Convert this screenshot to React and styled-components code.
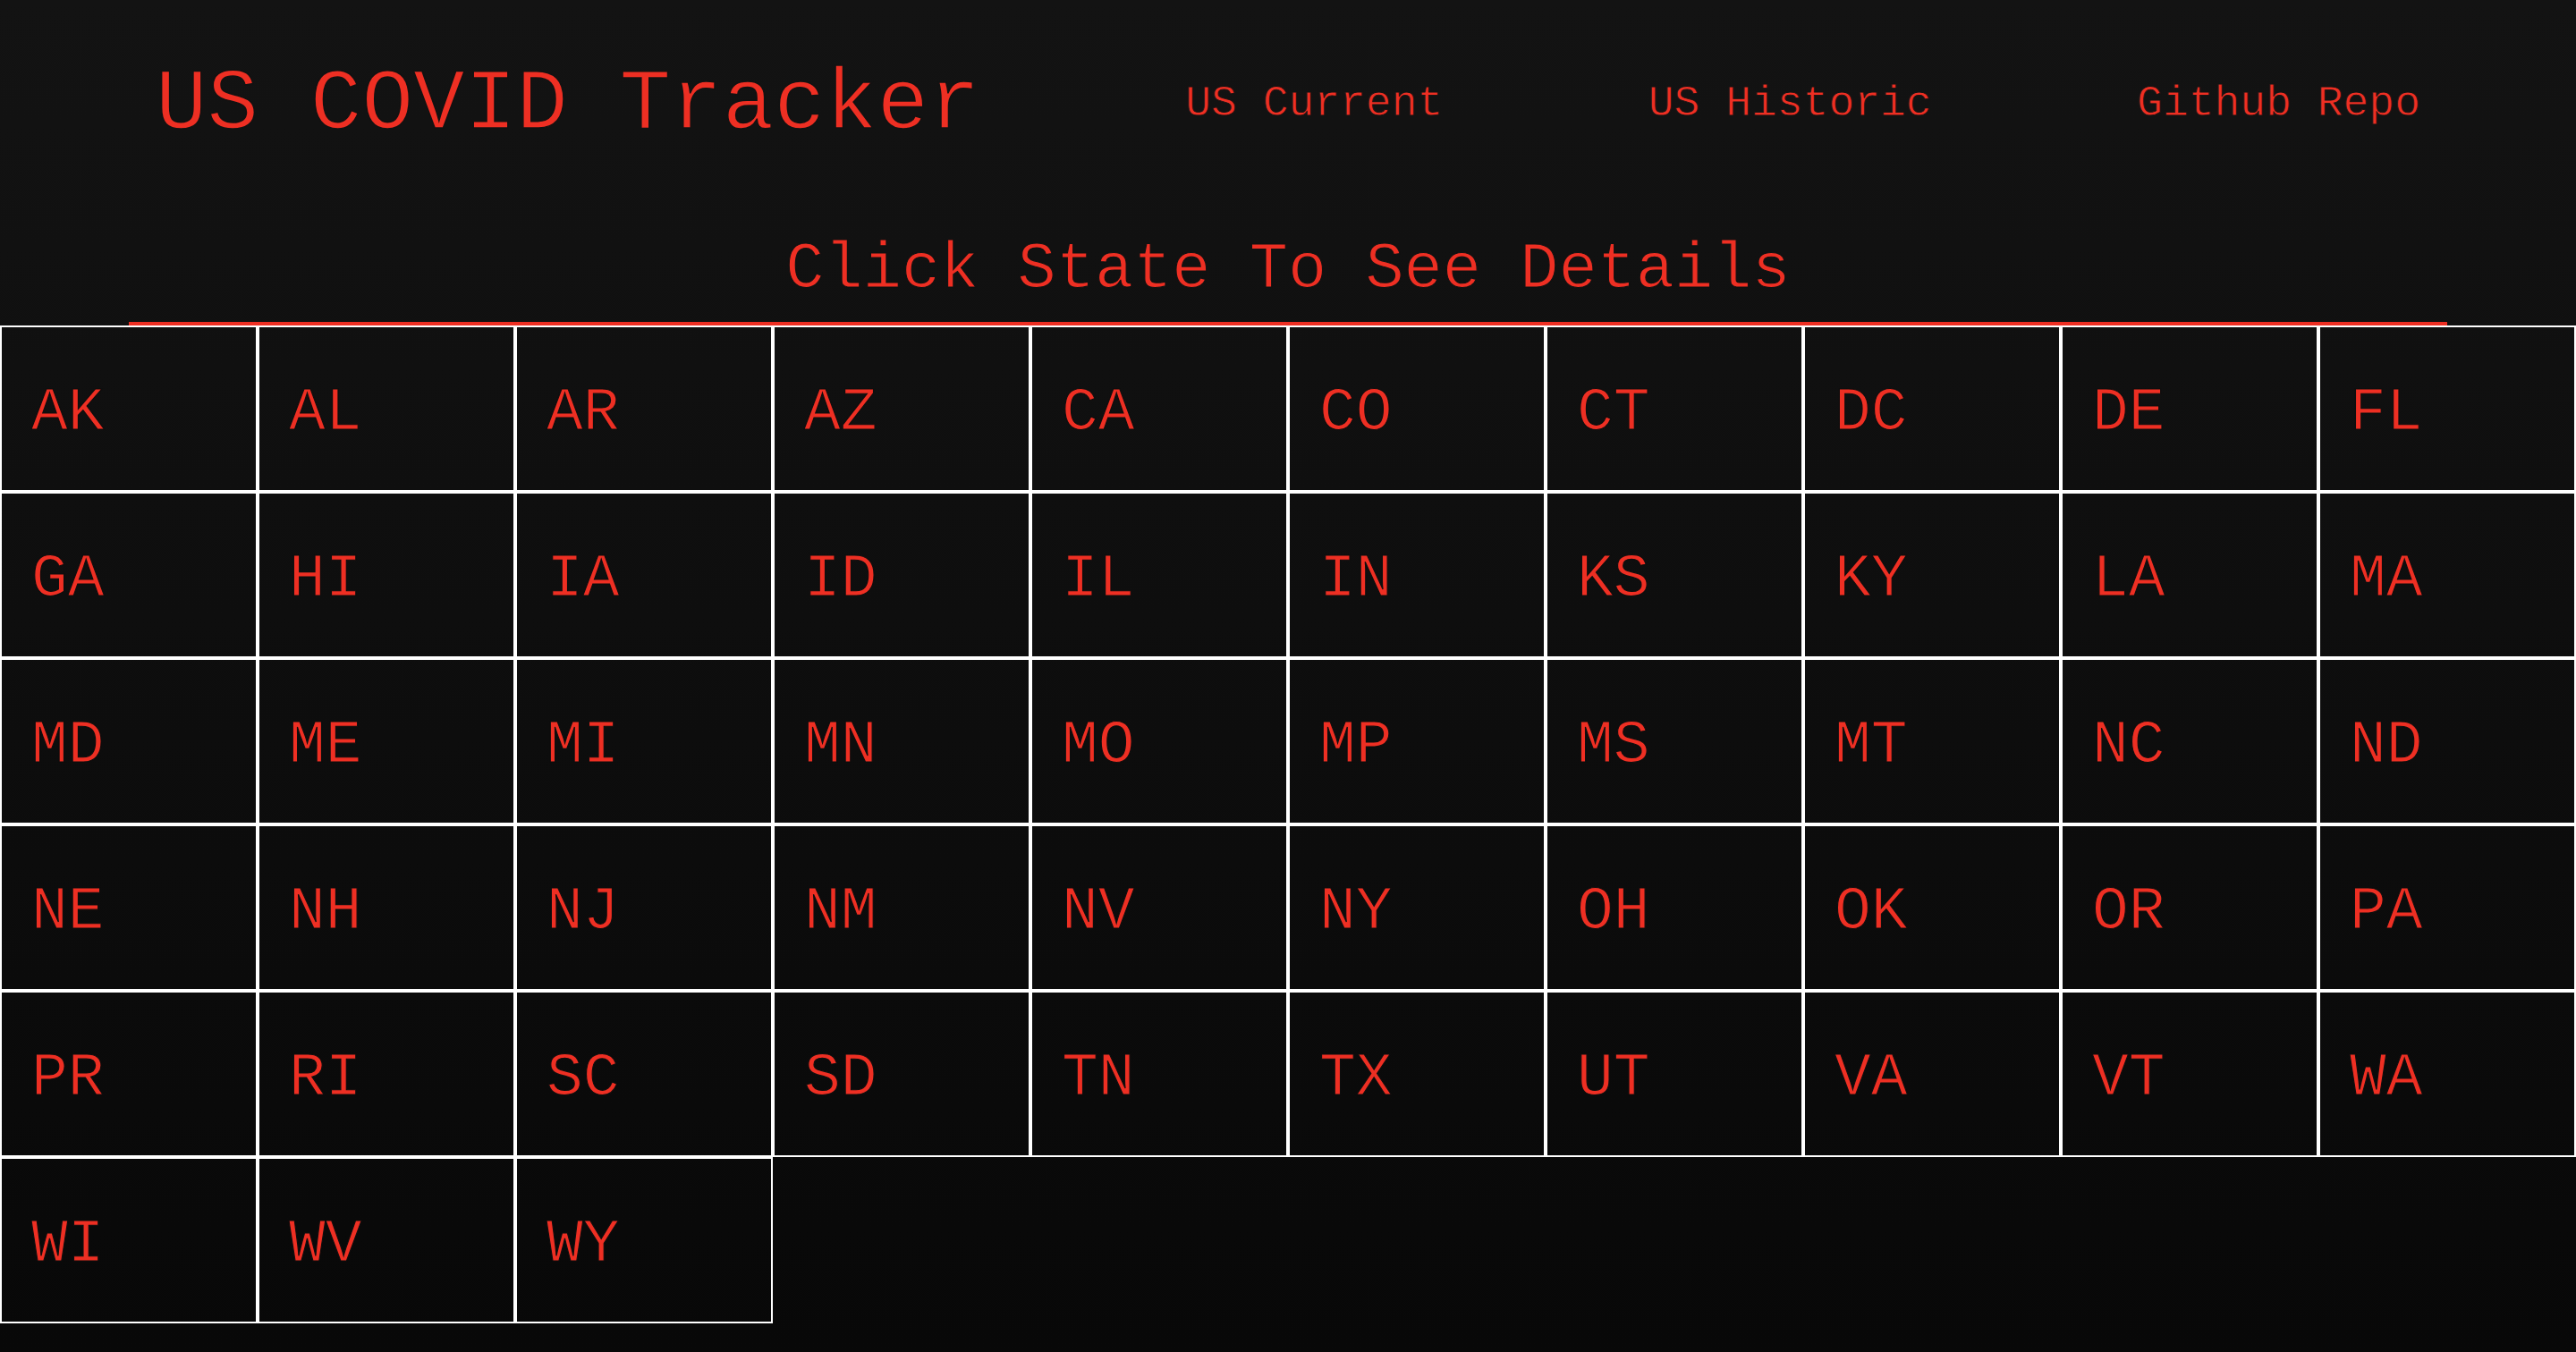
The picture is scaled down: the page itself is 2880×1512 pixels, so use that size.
import React from "react";
import styled, { createGlobalStyle } from "styled-components";

const STATES = [
  "AK", "AL", "AR", "AZ", "CA", "CO", "CT", "DC", "DE", "FL",
  "GA", "HI", "IA", "ID", "IL", "IN", "KS", "KY", "LA", "MA",
  "MD", "ME", "MI", "MN", "MO", "MP", "MS", "MT", "NC", "ND",
  "NE", "NH", "NJ", "NM", "NV", "NY", "OH", "OK", "OR", "PA",
  "PR", "RI", "SC", "SD", "TN", "TX", "UT", "VA", "VT", "WA",
  "WI", "WV", "WY",
];

const RED = "#ee2f23";

const GlobalStyle = createGlobalStyle`
  html, body {
    margin: 0;
    min-height: 100%;
  }
  body {
    min-height: 100vh;
    background: linear-gradient(to bottom, #131313, #080808);
    color: ${RED};
    font-family: "Liberation Mono", "DejaVu Sans Mono", monospace;
  }
`;

function Header() {
  return (
    <NavBar>
      <Title>US COVID Tracker</Title>
      <NavLink href="#">US Current</NavLink>
      <NavLink href="#">US Historic</NavLink>
      <NavLink href="#">Github Repo</NavLink>
    </NavBar>
  );
}

function StateGrid() {
  return (
    <Grid>
      {STATES.map((code) => (
        <StateCell key={code}>{code}</StateCell>
      ))}
    </Grid>
  );
}

export default function App() {
  return (
    <>
      <GlobalStyle />
      <Page>
        <Header />
        <Heading>Click State To See Details</Heading>
        <StateGrid />
      </Page>
    </>
  );
}

const Page = styled.div`
  display: flex;
  flex-direction: column;
`;

const NavBar = styled.nav`
  display: flex;
  align-items: center;
  justify-content: space-between;
  padding: 70px 174px 0;
  height: 96px;
`;

/* thin the regular mono face down towards a light weight */
const Title = styled.h1`
  margin: 0;
  font-size: 96px;
  font-weight: 400;
  line-height: 1;
  color: ${RED};
  white-space: nowrap;
  -webkit-text-stroke: 1.5px #121212;
`;

const NavLink = styled.a`
  margin-bottom: 4px;
  font-size: 48px;
  line-height: 1;
  color: ${RED};
  text-decoration: none;
  white-space: nowrap;
  -webkit-text-stroke: 0.8px #121212;
`;

const Heading = styled.h2`
  width: 90%;
  margin: 100px auto 0;
  padding-bottom: 22px;
  border-bottom: 4px solid ${RED};
  text-align: center;
  font-size: 72px;
  font-weight: 400;
  line-height: 1;
  color: ${RED};
  -webkit-text-stroke: 1.2px #121212;
`;

const Grid = styled.div`
  display: grid;
  grid-template-columns: repeat(10, 1fr);
  grid-auto-rows: 186px;
`;

const StateCell = styled.div`
  box-sizing: border-box;
  display: flex;
  align-items: center;
  padding: 8px 33px 0;
  border: 2px solid #ffffff;
  font-size: 68px;
  color: ${RED};
  cursor: pointer;
  -webkit-text-stroke: 1.2px #0e0e0e;
`;
